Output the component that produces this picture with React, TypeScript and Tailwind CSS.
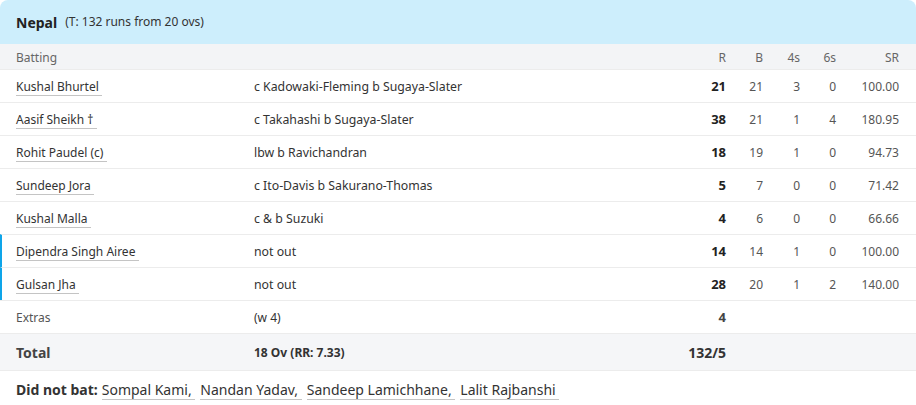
const rows = [
  { name: "Kushal Bhurtel", how: "c Kadowaki-Fleming b Sugaya-Slater", r: 21, b: 21, f: 3, s: 0, sr: "100.00" },
  { name: "Aasif Sheikh †", how: "c Takahashi b Sugaya-Slater", r: 38, b: 21, f: 1, s: 4, sr: "180.95" },
  { name: "Rohit Paudel (c)", how: "lbw b Ravichandran", r: 18, b: 19, f: 1, s: 0, sr: "94.73" },
  { name: "Sundeep Jora", how: "c Ito-Davis b Sakurano-Thomas", r: 5, b: 7, f: 0, s: 0, sr: "71.42" },
  { name: "Kushal Malla", how: "c & b Suzuki", r: 4, b: 6, f: 0, s: 0, sr: "66.66" },
  { name: "Dipendra Singh Airee", how: "not out", r: 14, b: 14, f: 1, s: 0, sr: "100.00", live: true },
  { name: "Gulsan Jha", how: "not out", r: 28, b: 20, f: 1, s: 2, sr: "140.00", live: true },
];

const dnb = ["Sompal Kami", "Nandan Yadav", "Sandeep Lamichhane", "Lalit Rajbanshi"];

const grid = "grid grid-cols-[238px_432px_40px_37px_37px_36px_63px] pl-4 pr-[17px] items-center";

export default function App() {
  return (
    <div className="w-[916px] h-[405px] bg-white text-[12px] text-[#333] font-['Noto_Sans','Open_Sans',sans-serif]">
      <div className="h-[44px] bg-[#cdeefc] rounded-t-lg flex items-center pl-4 gap-2">
        <span className="text-[14px] font-bold text-[#222]">Nepal</span>
        <span className="text-[12px] text-[#333]">(T: 132 runs from 20 ovs)</span>
      </div>
      <div className={`${grid} h-[25px] pt-[2px] bg-[#f3f4f6] text-[#666]`}>
        <span>Batting</span>
        <span></span>
        <span className="text-right">R</span>
        <span className="text-right">B</span>
        <span className="text-right">4s</span>
        <span className="text-right">6s</span>
        <span className="text-right">SR</span>
      </div>
      {rows.map((p) => (
        <div
          key={p.name}
          className={`${grid} h-[33px] pt-[2px] border-t border-[#ececec] ${p.live ? "border-l-2 border-l-[#0ea5e9] pl-[14px]" : ""}`}
        >
          <span>
            <span className="border-b border-[#c4c4c4]">{p.name}&nbsp;</span>
          </span>
          <span className="text-[12.3px]">{p.how}</span>
          <span className="text-right font-bold text-[13px] text-[#222]">{p.r}</span>
          <span className="text-right text-[#555]">{p.b}</span>
          <span className="text-right text-[#555]">{p.f}</span>
          <span className="text-right text-[#555]">{p.s}</span>
          <span className="text-right text-[#555]">{p.sr}</span>
        </div>
      ))}
      <div className={`${grid} h-[33px] pt-[2px] border-t border-[#ececec]`}>
        <span className="text-[#555]">Extras</span>
        <span>(w 4)</span>
        <span className="text-right font-bold text-[13px] text-[#444]">4</span>
      </div>
      <div className={`${grid} h-[38px] pt-[1px] border-y border-[#ececec] bg-[#f5f6f8] font-bold`}>
        <span className="text-[14px] text-[#444]">Total</span>
        <span className="text-[12px] text-[#333]">18 Ov (RR: 7.33)</span>
        <span className="text-right text-[14px] text-[#333] whitespace-nowrap">132/5</span>
      </div>
      <div className="h-[36px] flex items-center pl-4 pt-[1px] text-[14px] text-[#333]">
        <span className="font-bold mr-1">Did not bat:</span>
        {dnb.map((n, i) => (
          <span key={n} className="mr-[5px]">
            <span className="border-b border-[#c4c4c4]">
              {n}
              {i < dnb.length - 1 ? "," : ""}
              &nbsp;
            </span>
          </span>
        ))}
      </div>
    </div>
  );
}
